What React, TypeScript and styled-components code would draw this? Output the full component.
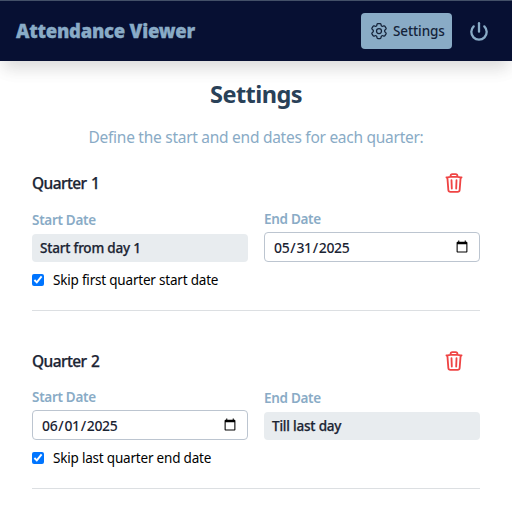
import React from 'react';
import styled, { createGlobalStyle } from 'styled-components';
import { HiOutlineCog6Tooth, HiOutlineTrash } from 'react-icons/hi2';

const GlobalStyle = createGlobalStyle`
  *, *::before, *::after { box-sizing: border-box; }
  html, body { margin: 0; background: #fff; overflow: hidden; }
  body { font-family: "Noto Sans", sans-serif; color: #1b2433; }
  button, input { font-family: inherit; color: inherit; }
`;

const Header = styled.header`
  display: flex;
  align-items: center;
  justify-content: space-between;
  height: 61px;
  padding: 0 23px 0 16px;
  background: #071033;
  border-top: 1px solid #435068;
  box-shadow: 0 10px 15px -3px rgba(0, 0, 0, 0.1), 0 10px 20px -2px rgba(0, 0, 0, 0.05);
`;

const Brand = styled.div`
  font-size: 18.5px;
  font-weight: 900;
  line-height: 28px;
  letter-spacing: -0.25px;
  -webkit-text-stroke: 0.3px #89abc6;
  color: #89abc6;
`;

const Actions = styled.nav`
  display: flex;
  align-items: center;
  gap: 17px;
`;

const SettingsButton = styled.button`
  display: flex;
  align-items: center;
  gap: 4px;
  width: 91px;
  height: 36px;
  padding: 0 0 0 8px;
  border: 0;
  border-radius: 4px;
  background: #89abc6;
  color: #14233a;
  font-size: 13.5px;
  font-weight: 500;
  letter-spacing: -0.1px;
  white-space: nowrap;
`;

const PowerButton = styled.button`
  display: flex;
  padding: 0 0 1px;
  border: 0;
  background: none;
  && { color: #89abc6; }
`;

const Main = styled.main`
  padding: 0 32px;
`;

const Title = styled.h1`
  margin: 17px 0 0;
  font-size: 23.5px;
  font-weight: 700;
  line-height: 32px;
  letter-spacing: -0.55px;
  text-align: center;
  color: #294158;
`;

const Intro = styled.p`
  margin: 15px 0 0;
  font-size: 15.5px;
  line-height: 24px;
  letter-spacing: -0.27px;
  text-align: center;
  color: #89abc6;
`;

const Quarter = styled.section`
  height: 178px;
  padding-top: 20px;
`;

const QuarterBody = styled.div`
  height: 142px;
  border-bottom: 1px solid #dcdfe2;
`;

const QuarterHead = styled.div`
  display: flex;
  align-items: center;
  justify-content: space-between;
  height: 28px;
  padding-right: 15px;
`;

const QuarterName = styled.h2`
  margin: 0;
  font-size: 15.5px;
  font-weight: 500;
  letter-spacing: -0.6px;
  word-spacing: 1px;
  -webkit-text-stroke: 0.25px #1b2433;
`;

const DeleteButton = styled.button`
  display: flex;
  padding: 0;
  border: 0;
  background: none;
  && { color: #ef4444; }

  path {
    stroke-width: 2px;
  }
`;

const Fields = styled.div`
  display: grid;
  grid-template-columns: 1fr 1fr;
  gap: 16px;
  margin-top: 12px;
`;

const Field = styled.div<{ $offset?: number }>`
  padding-top: ${({ $offset = 0 }) => $offset}px;
`;

const Label = styled.div`
  height: 20px;
  font-size: 13.5px;
  font-weight: 600;
  line-height: 20px;
  letter-spacing: -0.3px;
  color: #89abc6;
`;

const FixedValue = styled.div`
  height: 28px;
  margin-top: 4px;
  padding: 0 8px;
  border-radius: 4px;
  background: #e8ecef;
  font-size: 13.5px;
  font-weight: 500;
  line-height: 28px;
  letter-spacing: -0.2px;
  -webkit-text-stroke: 0.25px #1b2433;
`;

const DateInput = styled.input`
  display: block;
  width: 100%;
  height: 30px;
  margin-top: 3px;
  padding: 4px 8px;
  border: 1px solid #bcc5d0;
  border-radius: 4px;
  background: #fff;
  font-size: 14px;
  font-weight: 500;
  letter-spacing: -0.35px;
`;

const SkipOption = styled.label`
  display: flex;
  align-items: center;
  gap: 9px;
  height: 20px;
  margin-top: 8px;
  font-size: 13.5px;
  letter-spacing: -0.2px;
  color: #000;
`;

const Checkbox = styled.input`
  width: 12px;
  height: 12px;
  margin: 0;
`;

function PowerIcon() {
  return (
    <svg
      width="20"
      height="20"
      viewBox="0 0 20 20"
      fill="none"
      stroke="currentColor"
      strokeWidth="2.3"
      strokeLinecap="round"
    >
      <path d="M10 2.2V10.7" />
      <path d="M15.3 5.4a7.7 7.7 0 1 1-10.6 0" />
    </svg>
  );
}

function QuarterTop({ name }: { name: string }) {
  return (
    <QuarterHead>
      <QuarterName>{name}</QuarterName>
      <DeleteButton aria-label={`Delete ${name}`}>
        <HiOutlineTrash size={22} />
      </DeleteButton>
    </QuarterHead>
  );
}

function SkipCheckbox({ label }: { label: string }) {
  return (
    <SkipOption>
      <Checkbox type="checkbox" defaultChecked />
      {label}
    </SkipOption>
  );
}

export default function App() {
  return (
    <>
      <GlobalStyle />
      <Header>
        <Brand>Attendance Viewer</Brand>
        <Actions>
          <SettingsButton>
            <HiOutlineCog6Tooth size={20} />
            Settings
          </SettingsButton>
          <PowerButton aria-label="Log out">
            <PowerIcon />
          </PowerButton>
        </Actions>
      </Header>
      <Main>
        <Title>Settings</Title>
        <Intro>Define the start and end dates for each quarter:</Intro>
        <Quarter>
          <QuarterBody>
            <QuarterTop name="Quarter 1" />
            <Fields>
              <Field $offset={1}>
                <Label>Start Date</Label>
                <FixedValue>Start from day 1</FixedValue>
                <SkipCheckbox label="Skip first quarter start date" />
              </Field>
              <Field>
                <Label>End Date</Label>
                <DateInput type="date" defaultValue="2025-05-31" />
              </Field>
            </Fields>
          </QuarterBody>
        </Quarter>
        <Quarter>
          <QuarterBody>
            <QuarterTop name="Quarter 2" />
            <Fields>
              <Field>
                <Label>Start Date</Label>
                <DateInput type="date" defaultValue="2025-06-01" />
                <SkipCheckbox label="Skip last quarter end date" />
              </Field>
              <Field $offset={1}>
                <Label>End Date</Label>
                <FixedValue>Till last day</FixedValue>
              </Field>
            </Fields>
          </QuarterBody>
        </Quarter>
      </Main>
    </>
  );
}
